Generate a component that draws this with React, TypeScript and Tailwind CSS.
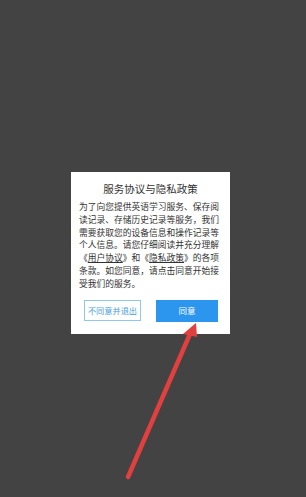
import React from "react";

export default function App() {
  const font = { fontFamily: '"Noto Sans CJK SC", "Noto Sans", sans-serif' };
  return (
    <div className="relative h-[497px] w-[306px] overflow-hidden bg-[#434343]" style={font}>
      <div className="ml-[71px] pt-[172px]">
        <div className="flex w-[159px] flex-col bg-white pb-[12px] pt-[10px]">
          <div className="text-center text-[10.5px] leading-[14px] text-[#333]">服务协议与隐私政策</div>
          <div className="mt-[5px] pl-[8px] pr-[10px] text-[8.75px] leading-[12.8px] text-[#333]">
            为了向您提供英语学习服务、保存阅读记录、存储历史记录等服务，我们需要获取您的设备信息和操作记录等个人信息。请您仔细阅读并充分理解《<span className="underline">用户协议</span>》和《<span className="underline">隐私政策</span>》的各项条款。如您同意，请点击同意开始接受我们的服务。
          </div>
          <div className="mt-[9px] flex gap-[15px] pl-[13px]">
            <div className="flex h-[21px] w-[57px] items-center justify-center border border-[#8fc8ef] text-[8.2px] text-[#4a9fe0]">
              不同意并退出
            </div>
            <div className="flex h-[22px] w-[62px] items-center justify-center bg-[#2c96ee] text-[8.5px] text-white">
              同意
            </div>
          </div>
        </div>
      </div>
      <svg className="absolute left-0 top-0" width="306" height="497" viewBox="0 0 306 497">
        <line x1="128" y1="477" x2="190" y2="334" stroke="#e2403e" strokeWidth="4.5" strokeLinecap="round" />
        <polygon points="196,323 183,334 197,337" fill="#e2403e" />
      </svg>
    </div>
  );
}
